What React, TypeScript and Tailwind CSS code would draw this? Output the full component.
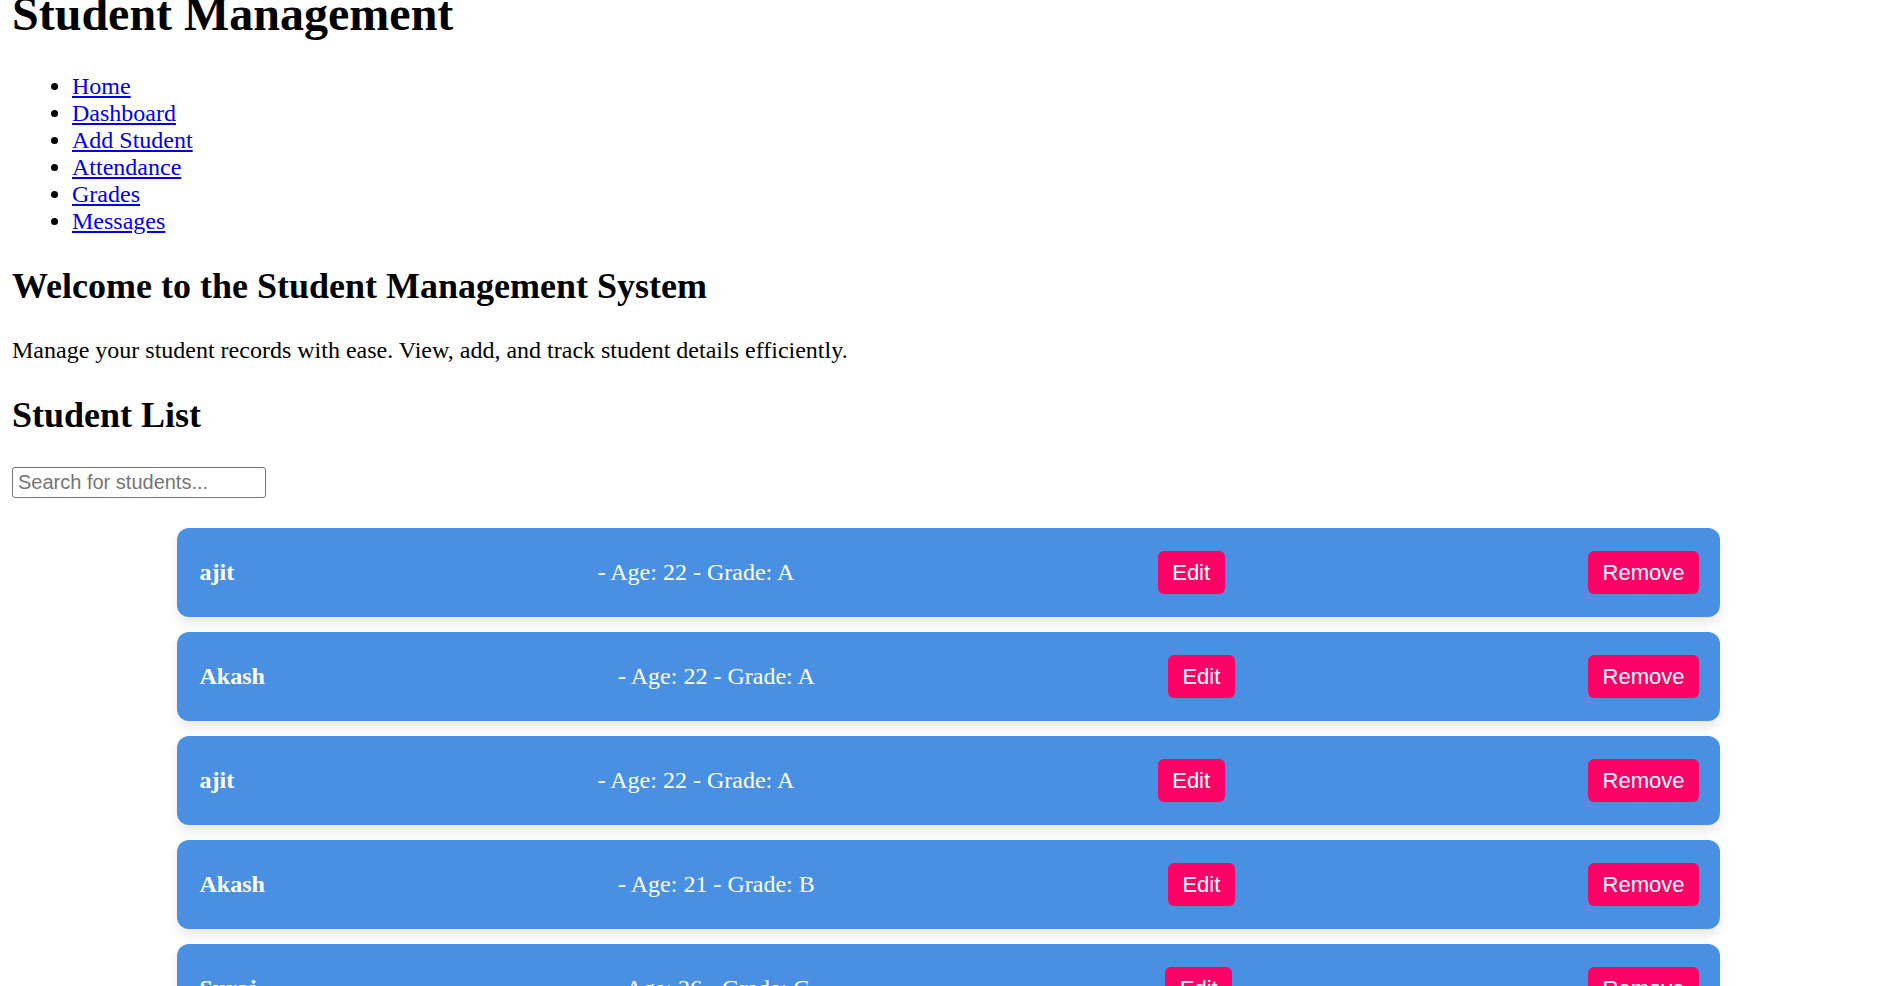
const links = ["Home", "Dashboard", "Add Student", "Attendance", "Grades", "Messages"];

const students = [
  { name: "ajit", age: 22, grade: "A" },
  { name: "Akash", age: 22, grade: "A" },
  { name: "ajit", age: 22, grade: "A" },
  { name: "Akash", age: 21, grade: "B" },
  { name: "Suraj", age: 26, grade: "C" },
];

const StudentCard = ({ name, age, grade }: { name: string; age: number; grade: string }) => (
  <div className="ml-[165px] w-[1543px] h-[89px] pl-[22.5px] pr-[21px] flex items-center justify-between bg-[#4a90e2] rounded-[12px] shadow-[0_6px_12px_rgba(0,0,0,0.1)] text-white text-[24px] leading-[27px]">
    <strong className="font-bold">{name}</strong>
    <span>
      - Age: {age} - Grade: {grade}
    </span>
    <button className="h-[43px] px-[14.5px] bg-[#ff0066] rounded-[6px] text-white text-[22px] font-['Liberation_Sans',Arial,sans-serif]">
      Edit
    </button>
    <button className="h-[43px] px-[14.5px] bg-[#ff0066] rounded-[6px] text-white text-[22px] font-['Liberation_Sans',Arial,sans-serif]">
      Remove
    </button>
  </div>
);

export default function App() {
  return (
    <div className="h-[986px] overflow-hidden bg-white px-[12px] text-black font-['Liberation_Serif','Times_New_Roman',serif]">
      <h1 className="mt-[-14px] mb-[31px] text-[48px] leading-[55.5px] font-bold">
        Student Management
      </h1>
      <nav>
        <ul className="list-disc pl-[60px] text-[24px] leading-[27px]">
          {links.map((label) => (
            <li key={label}>
              <a href="#" className="text-[#0000ee] underline">
                {label}
              </a>
            </li>
          ))}
        </ul>
      </nav>
      <h2 className="mt-[31px] text-[36px] leading-[40.5px] font-bold">
        Welcome to the Student Management System
      </h2>
      <p className="mt-[31px] text-[24px] leading-[27px]">
        Manage your student records with ease. View, add, and track student details efficiently.
      </p>
      <h2 className="mt-[31px] text-[36px] leading-[40.5px] font-bold">Student List</h2>
      <input
        type="text"
        placeholder="Search for students..."
        className="block mt-[31px] w-[254px] h-[31px] px-[5px] border-[1.5px] border-[#767676] rounded-[3px] text-[20px] font-['Liberation_Sans',Arial,sans-serif] placeholder:text-[#757575]"
      />
      <div className="mt-[30px] flex flex-col gap-[15px]">
        {students.map((s, i) => (
          <StudentCard key={i} {...s} />
        ))}
      </div>
    </div>
  );
}
